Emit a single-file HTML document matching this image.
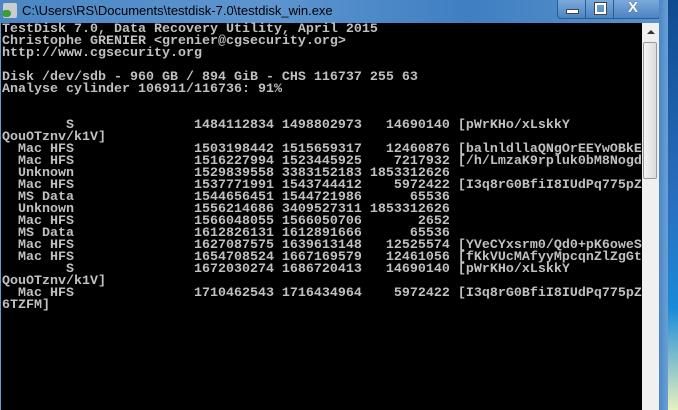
<!DOCTYPE html>
<html><head><meta charset="utf-8"><style>
html,body{margin:0;padding:0;width:678px;height:410px;overflow:hidden;background:#1a5da8;}
#title{position:absolute;left:0;top:0;width:668px;height:23px;background:linear-gradient(90deg,#4a86c4 0%,#5e95cf 40%,#3f7fc2 70%,#5a93cc 100%);}
#title .t{position:absolute;left:22px;top:3px;font:13px "Liberation Sans",sans-serif;color:#000;}
#icon{position:absolute;left:3px;top:3px;width:14px;height:15px;background:#ccc;border-radius:2px;}
#icon2{position:absolute;left:2px;top:10px;width:9px;height:7px;background:#3a9d3a;border-radius:4px;}
#btns{position:absolute;left:557px;top:-1px;width:102px;height:18px;border:1px solid #2b5d95;border-radius:0 0 4px 4px;background:linear-gradient(#7aa9dc,#4d84c2);}
.d{position:absolute;top:0;width:1px;height:18px;background:#2b5d95;}
#frameR{position:absolute;left:659px;top:0;width:9px;height:410px;background:linear-gradient(90deg,#4a86c4,#6aa0d6);}
#desk{position:absolute;left:668px;top:0;width:10px;height:410px;background:linear-gradient(#0e4a90 0%,#2a70c0 50%,#1a8ad8 75%,#e8f0c0 100%);}
#con{position:absolute;left:0;top:23px;width:642px;height:387px;background:#000;border-left:1px solid #6a9ad0;}
#sb{position:absolute;left:642px;top:23px;width:17px;height:387px;background:#f0f0f0;}
#thumb{position:absolute;left:1px;top:19px;width:14px;height:137px;background:linear-gradient(90deg,#f4f4f4,#dcdcdc);border:1px solid #9a9a9a;border-radius:2px;box-sizing:border-box;}
pre{position:absolute;left:2px;top:24px;margin:0;font-family:"Liberation Mono",monospace;font-size:13.33px;line-height:12px;color:#c0c0c0;font-weight:bold;white-space:pre;}
</style></head><body>
<div id="title"><div id="icon"></div><div id="icon2"></div><div class="t">C:\Users\RS\Documents\testdisk-7.0\testdisk_win.exe</div>
<div id="btns"><div class="d" style="left:27px"></div><div class="d" style="left:55px"></div>
<div style="position:absolute;left:8px;top:9px;width:11px;height:3px;background:#fff;border:1px solid #444;"></div>
<div style="position:absolute;left:37px;top:3px;width:7px;height:7px;border:2px solid #fff;outline:1px solid #444;"></div>
<div style="position:absolute;left:70px;top:-1px;font:bold 15px 'Liberation Sans',sans-serif;color:#fff;text-shadow:0 0 1px #333;">X</div>
</div></div>
<div id="frameR"></div><div id="desk"></div>
<div id="con"></div>
<div id="sb"><div style="position:absolute;left:5px;top:7px;width:0;height:0;border-left:4px solid transparent;border-right:4px solid transparent;border-bottom:4px solid #333;"></div><div id="thumb"></div></div>
<pre>TestDisk 7.0, Data Recovery Utility, April 2015
Christophe GRENIER &lt;grenier@cgsecurity.org&gt;
http://www.cgsecurity.org

Disk /dev/sdb - 960 GB / 894 GiB - CHS 116737 255 63
Analyse cylinder 106911/116736: 91%


        S               1484112834 1498802973   14690140 [pWrKHo/xLskkY
QouOTznv/k1V]
  Mac HFS               1503198442 1515659317   12460876 [balnldllaQNgOrEEYwOBkE
  Mac HFS               1516227994 1523445925    7217932 [/h/LmzaK9rpluk0bM8Nogd
  Unknown               1529839558 3383152183 1853312626
  Mac HFS               1537771991 1543744412    5972422 [I3q8rG0BfiI8IUdPq775pZ
  MS Data               1544656451 1544721986      65536
  Unknown               1556214686 3409527311 1853312626
  Mac HFS               1566048055 1566050706       2652
  MS Data               1612826131 1612891666      65536
  Mac HFS               1627087575 1639613148   12525574 [YVeCYxsrm0/Qd0+pK6oweS
  Mac HFS               1654708524 1667169579   12461056 [fKkVUcMAfyyMpcqnZlZgGt
        S               1672030274 1686720413   14690140 [pWrKHo/xLskkY
QouOTznv/k1V]
  Mac HFS               1710462543 1716434964    5972422 [I3q8rG0BfiI8IUdPq775pZ
6TZFM]</pre>
</body></html>
